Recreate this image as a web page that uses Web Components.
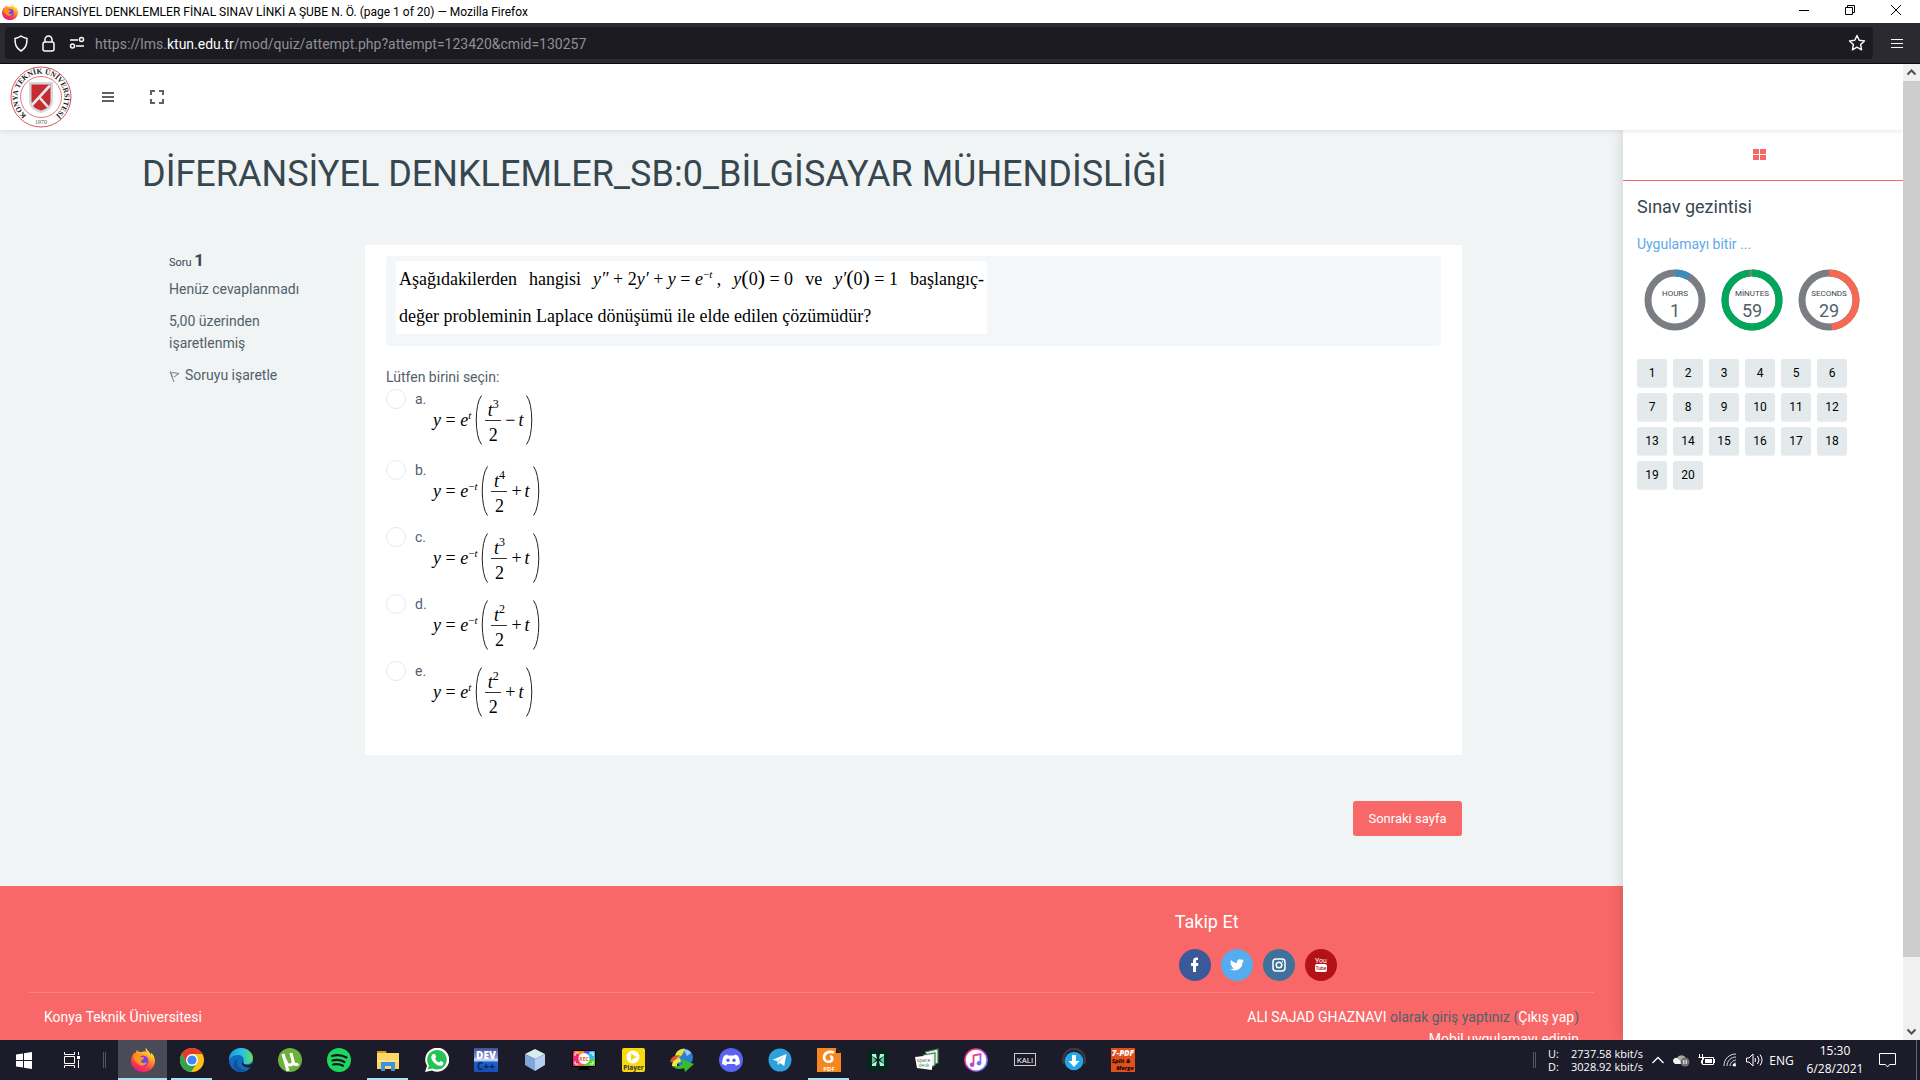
<!DOCTYPE html>
<html lang="tr">
<head>
<meta charset="utf-8">
<title>DİFERANSİYEL DENKLEMLER FİNAL SINAV LİNKİ A ŞUBE N. Ö.</title>
<style>
  html, body { height: 100%; margin: 0; }
  body {
    display: flex; flex-direction: column; overflow: hidden;
    font: 14px/22px Roboto, sans-serif; color: #526069; background: #f0f4f5;
    --brand: #f96868; --ink: #37474f; --ui: "Open Sans", "Noto Sans", sans-serif; --narrow: Roboto, "Noto Sans", sans-serif;
  }
  .viewport { flex: 1; display: flex; min-height: 0; }
  .site { flex: 1; display: flex; flex-direction: column; min-width: 0; min-height: 0; }
  .columns { flex: 1; display: flex; min-height: 0; }
  .scroll { flex: 1; min-width: 0; overflow: hidden; display: flex; flex-direction: column; }
</style>
</head>
<body>
<window-title>DİFERANSİYEL DENKLEMLER FİNAL SINAV LİNKİ A ŞUBE N. Ö. (page 1 of 20) — Mozilla Firefox</window-title>
<address-bar><span>https://lms.</span><b slot="host">ktun.edu.tr</b><span slot="path">/mod/quiz/attempt.php?attempt=123420&amp;cmid=130257</span></address-bar>
<div class="viewport">
  <div class="site">
    <site-header></site-header>
    <div class="columns">
      <div class="scroll">
        <quiz-page heading="DİFERANSİYEL DENKLEMLER_SB:0_BİLGİSAYAR MÜHENDİSLİĞİ">
          <question-info slot="info" number="1"></question-info>
          <question-card>
            <question-text slot="text"></question-text>
            <answer-option letter="a"><math-formula power="t" degree="3" sign="−"></math-formula></answer-option>
            <answer-option letter="b"><math-formula power="−t" degree="4" sign="+"></math-formula></answer-option>
            <answer-option letter="c"><math-formula power="−t" degree="3" sign="+"></math-formula></answer-option>
            <answer-option letter="d"><math-formula power="−t" degree="2" sign="+"></math-formula></answer-option>
            <answer-option letter="e"><math-formula power="t" degree="2" sign="+"></math-formula></answer-option>
          </question-card>
        </quiz-page>
        <site-footer></site-footer>
      </div>
      <quiz-aside>
        <time-circle label="HOURS" value="1" part-of="12" color="#3b8dbd"></time-circle>
        <time-circle label="MİNUTES" value="59" part-of="60" color="#00a65a"></time-circle>
        <time-circle label="SECONDS" value="29" part-of="60" color="#f56954"></time-circle>
      </quiz-aside>
    </div>
  </div>
  <page-scrollbar></page-scrollbar>
</div>
<task-bar></task-bar>

<script>
const define = (name, render) => customElements.define(name, class extends HTMLElement {
  constructor() { super(); this.attachShadow({ mode: 'open' }); }
  connectedCallback() { this.shadowRoot.innerHTML = render(this); }
});
const reset = `:host,*{box-sizing:border-box} button{font:inherit;color:inherit;background:none;border:0;padding:0;margin:0;cursor:pointer} svg{display:block} a{text-decoration:none}`;

const foxArt = `
  <defs><linearGradient id="fx" x1=".8" y1="0" x2=".3" y2="1"><stop offset="0" stop-color="#fff04a"/><stop offset=".4" stop-color="#ff9a1f"/><stop offset=".75" stop-color="#ff3650"/><stop offset="1" stop-color="#e31587"/></linearGradient></defs>
  <path fill="url(#fx)" d="M15 0c-1 2 0 3 1 4-2-1-4-1-5 0-2 0-4 0-5-2-1 1-1 3-1 4L4 4C2 6 0 9 0 13c0 6 5 11 12 11s12-5 12-11c0-4-2-7-4-8 0 1 0 2-.5 2C19 4 16 3 15 0z"/>
  <circle cx="12" cy="13" r="5.500" fill="#7542e5"/><path fill="#ff9422" d="M3 9c2-2 5-2 7 0 2 0 3 0 3 1s-2 2-3 3c0 2 3 3 6 1-1 4-6 5-9 2C4 14 3 12 3 9z"/>
  <path fill="#ffd33a" d="M15 0c-1 4 5 6 6 12 0-3-1-5-2-6 2 1 4 4 4 7 0-4-1-6-3-8 0 1 0 2-.5 2C19 4 16 3 15 0z"/>`;

const apps = {
  firefox: foxArt,
  chrome: `<circle cx="12" cy="12" r="12" fill="#fbc116"/><path fill="#e33b2e" d="M1.600 6A12 12 0 0 1 22.400 6L12 6z M1.600 6L7 15l5-9z"/><path fill="#31a350" d="M1.600 6A12 12 0 0 0 11 24l6-9-10 0z"/><circle cx="12" cy="12" r="6" fill="#fff"/><circle cx="12" cy="12" r="4.600" fill="#4285f4"/>`,
  edge: `<defs><linearGradient id="eg" x1="0" x2="1"><stop offset="0" stop-color="#1b9de2"/><stop offset=".6" stop-color="#2fc2df"/><stop offset="1" stop-color="#66e04b"/></linearGradient></defs><circle cx="12" cy="12" r="12" fill="#0f6cbd"/><path fill="url(#eg)" d="M0 12C0 5 5 0 12 0s12 5 12 10c0 4-3 6-6 6-2 0-4 0-4-1s1-1 1-3c0-3-3-5-6-5-5 0-8 3-9 5z"/><path fill="#1d1d2b" d="M14 14.500c1 2 3 3 6 2.500l4-2-1 4-2 .5c-5 0-9-2-8-6z"/><path fill="#1550a0" d="M8 14c0 5 4 8 9 8-3 2-8 2-11-1-3-4-1-9 3-10-1 1-1 2-1 3z"/>`,
  utorrent: `<circle cx="12" cy="12" r="12" fill="#6bb13b"/><path d="M5 6l5 17" fill="none" stroke="#fff" stroke-width="3"/><path d="M7.500 12c1 4 2.500 5 4.500 5s3.500-2 3-4L13 5M15 13c.5 3 2.500 4.500 5.500 3" fill="none" stroke="#fff" stroke-width="3"/>`,
  spotify: `<circle cx="12" cy="12" r="12" fill="#1ed760"/><path d="M5 8c5-1.500 10-1 14.500 1.500M5.500 12.500c4-1 8-.7 12 1.500M6 16.500c4-.8 7-.5 10 1.200" fill="none" stroke="#14141c" stroke-width="2.200" stroke-linecap="round"/>`,
  files: `<path fill="#d99a1c" d="M1 3h9l1 3H1z"/><path fill="#fdd663" d="M1 5h22v16H1z"/><path fill="#3c93dc" d="M5 14h14v9h-4v-5H9v5H5z"/><path fill="#ffe28c" d="M1 12h22v2H1z"/>`,
  whatsapp: `<path fill="#fff" d="M0 24l2-6A12 12 0 1 1 7 22.500z"/><path fill="#25c353" d="M2.500 21.500l1.500-4a9.800 9.800 0 1 1 3.500 3z"/><path fill="#fff" d="M8 6l2 0 1.200 3-1.200 1.500c1 2 2 3 4 4l1.500-1.500 3 1.200c0 3-2 4-4 3.500C10 16.500 7 13 6.300 10 6 8 7 7 8 6z"/>`,
  dev: `<defs><linearGradient id="dv" y1="0" y2="1" x2="0"><stop offset="0" stop-color="#3f4f9e"/><stop offset=".4" stop-color="#8d9bd8"/><stop offset=".5" stop-color="#dfe6ff"/><stop offset=".6" stop-color="#1d5fd0"/><stop offset="1" stop-color="#1550b8"/></linearGradient></defs><rect y="0" x="0" width="24" height="24" fill="url(#dv)"/><text x="12" y="11" font-size="10" font-weight="800" text-anchor="middle" fill="#fff">DEV</text><text x="12" y="22" font-size="10" font-weight="700" text-anchor="middle" fill="#0b2550">C++</text>`,
  box: `<path fill="#d5f0ec" d="M12 1l10 5-10 5L2 6z"/><path fill="#7ea7da" d="M2 6l10 5v12L2 17z"/><path fill="#b4cff2" d="M22 6l-10 5v12l10-6z"/>`,
  rec: `<rect y="2" width="24" height="17" fill="#000"/><path fill="#ff8a1e" d="M1 3h11v8z"/><path fill="#f0257b" d="M1 3l11 8-11 7z"/><path fill="#8b3fe0" d="M12 3h6l-6 8z"/><path fill="#2fbcf0" d="M18 3h5v8H12z"/><path fill="#61cf2c" d="M23 11v7H12v-7z"/><path fill="#ff5a5a" d="M1 18l11-7v7z"/><path d="M6 22h12l-2-3H8z"/><circle cx="12" cy="10.500" r="5.500" fill="#fff"/><text x="12" y="12.500" font-size="5" font-weight="700" text-anchor="middle" fill="#f04a3a">REC</text><path d="M3 8V5h3M18 5h3v3M3 13v3h3M18 16h3v-3" fill="none" stroke="#fff"/>`,
  player: `<rect y="0" x="1" width="23" height="24" rx="2" fill="#f8d90f"/><circle cx="12" cy="9" r="6.500" fill="#fff"/><path fill="#f8d90f" d="M10 5.500l5.500 3.500-5.500 3.500z"/><text x="12.500" y="22" font-size="6.500" font-weight="700" text-anchor="middle" fill="#333">Player</text>`,
  idm: `<circle cx="14" cy="9.500" r="9" fill="#2b7fd3"/><path fill="#9cc9f3" d="M14 2c3-1 6 1 7 3l-4 3z"/><path fill="#e9e23b" d="M5 8C6 3 11 0 15 1l-3 6-5 4z"/><path fill="#e05525" d="M0 14C1 9 6 6 11 8c-5 1-6 4-6 6z"/><path fill="#f2e64b" d="M2 18c0-5 3-7 8-8l1 4c-4 0-5 3-3 5z"/><path fill="#36bd2a" d="M2 18c3 3 8 4 12 2l1 4 9-8-13-5 2 5c-4 2-8 3-11 2z"/>`,
  discord: `<circle cx="12" cy="12" r="12" fill="#5865f2"/><path fill="#fff" d="M8 6.500l1 1h6l1-1 3 1.200c1.500 3 2 5.500 1.800 8.300L17 17.800l-1.200-1.800H8.200L7 17.800 3.200 16C3 13.200 3.500 10.700 5 7.700z"/><circle cx="9" cy="12.300" r="1.700" fill="#5865f2"/><circle cx="15" cy="12.300" r="1.700" fill="#5865f2"/>`,
  telegram: `<circle cx="12" cy="12" r="11.500" fill="#2ca1dc"/><path fill="#fff" d="M4.500 11.800L18.500 6l-2.300 12-4.200-3-2 2-.8-4z"/><path fill="#bcd9ea" d="M9.200 13l7-5-5 6-1.200 3z"/>`,
  foxit: `<path fill="#f6861f" d="M0 0h19l5 5v19H0z"/><path fill="#1a1a22" d="M19 0l5 5h-5z"/><path d="M17 4.500c-6-2-10 1-10 5 0 3 3 5 6 4 3-1 3-5 0-5" fill="none" stroke="#fff" stroke-width="2.600"/><text x="12" y="22.500" font-size="6" font-weight="700" text-anchor="middle" fill="#fff">PDF</text>`,
  xapp: `<rect x="1" y="1" width="22" height="22" rx="4" fill="#03261d"/><path fill="#b6f0d8" d="M6 6h4l1 5-5-3zM18 6h-4l-1 5 5-3zM6 18h4l1-5-5 3zM18 18h-4l-1-5 5 3z"/><path fill="#5dc79c" d="M6 8l4 4-4 4zM18 8l-4 4 4 4z"/>`,
  spacedesk: `<path d="M10 4l13-3v14l-3 1M8 7l12-2v12l-3 2" fill="#eee" stroke="#388443" stroke-width="1.200"/><path fill="#fff" d="M0 9l17-2v15L2 20z"/><text x="8.500" y="14" font-size="5" text-anchor="middle" fill="#555">space</text><text x="9" y="19" font-size="5" text-anchor="middle" fill="#1c9a44">desk</text>`,
  music: `<defs><linearGradient id="mu" x2="1" y2="1"><stop offset="0" stop-color="#fb3c5a"/><stop offset=".6" stop-color="#c24be0"/><stop offset="1" stop-color="#37b9f5"/></linearGradient></defs><circle cx="12" cy="12" r="11.800" fill="url(#mu)"/><circle cx="12" cy="12" r="10.300" fill="#fff"/><path d="M9.500 16.500V7.500l7-1.500v9" fill="none" stroke="url(#mu)" stroke-width="1.800"/><circle cx="8" cy="16.800" r="2.200" fill="#a34de8"/><circle cx="15" cy="15.300" r="2.200" fill="#6d72ee"/>`,
  kali: `<rect x="1.500" y="5.500" width="21" height="12" fill="none" stroke="#ccc"/><text x="12" y="15" font-size="8" text-anchor="middle" fill="#fff">KALI</text>`,
  download: `<path d="M2 16C-1 8 5 1 12 1s13 7 10 15" fill="none" stroke="#39393f" stroke-width="2.500"/><circle cx="12" cy="13" r="9.300" fill="#27a5ea"/><path fill="#fff" d="M10 7h4v6h3.500L12 19l-5.500-6H10z"/>`,
  sevenpdf: `<rect width="24" height="24" fill="#e04f1c"/><text x="12" y="7.500" font-size="8" font-weight="800" font-style="italic" text-anchor="middle" fill="#fff">7-PDF</text><text x="10" y="15" font-size="6" font-weight="700" font-style="italic" text-anchor="middle">Split &amp;</text><text x="14" y="21.500" font-size="6" font-weight="700" font-style="italic" text-anchor="middle">Merge</text>`
};

define('window-title', () => `<style>${reset}
  :host{display:flex;align-items:center;height:23px;background:#fff;color:#000;font:12px/20px var(--narrow);padding:0 1px 0 2px;flex:none}
  .name{flex:1;padding-left:5px;white-space:nowrap}
  .tools{display:flex} button{width:46px;height:23px;display:grid;place-items:center;padding-bottom:3px}
  </style><svg width="16" height="16" viewBox="0 0 24 24" aria-hidden="true">${foxArt}</svg>
  <span class="name"><slot></slot></span>
  <span class="tools">
  <button aria-label="Minimize"><svg width="10" height="10"><path d="M0 5.500h10" stroke="#000"/></svg></button>
  <button aria-label="Restore"><svg width="10" height="10" fill="none" stroke="#000"><path d="M.5 2.500h7v7h-7zM2.500 2.500v-2h7v7h-2"/></svg></button>
  <button aria-label="Close"><svg width="10" height="10" stroke="#000"><path d="M0 0l10 10M10 0L0 10"/></svg></button></span>`);

define('address-bar', () => `<style>${reset}
  :host{display:flex;align-items:center;height:41px;flex:none;background:#2b2a33;border-bottom:1px solid #0c0c0d;padding-left:5px;color:#fbfbfe}
  .field{flex:1;height:32px;background:#1c1b22;border-radius:4px;display:flex;align-items:center;padding:0 7px 0 8px}
  .icons{display:flex;gap:12px;align-items:center;padding-right:10px}
  .url{flex:1;font:14px/20px var(--narrow);padding-top:2px;color:#8f8f98;white-space:nowrap;outline:0} ::slotted(b){font-weight:400;color:#fbfbfe}
  .menu{width:47px;height:40px;display:grid;place-items:center}
  </style><div class="field"><span class="icons">
  <button aria-label="Tracking protection"><svg width="16" height="17" fill="none" stroke="#fbfbfe" stroke-width="1.500"><path d="M8 1c2 1.500 4 2 6 2.500 0 6-1 9.500-6 12.500-5-3-6-6.500-6-12.500C4 3 6 2.500 8 1z"/></svg></button>
  <button aria-label="Connection secure"><svg width="16" height="17" fill="none" stroke="#fbfbfe" stroke-width="1.500"><rect x="2" y="7" width="11" height="9" rx="2"/><path d="M4 7V4.500a3.500 3.500 0 0 1 7 0V7"/></svg></button>
  <button aria-label="Permissions"><svg width="16" height="16" fill="none" stroke="#fbfbfe" stroke-width="1.500"><path d="M1 5h8M7 11h8"/><circle cx="12.500" cy="4.500" r="2"/><circle cx="3.500" cy="11" r="2"/></svg></button></span>
  <span class="url" role="textbox" aria-label="Address"><slot></slot><slot name="host"></slot><slot name="path"></slot></span>
  <button aria-label="Bookmark"><svg width="18" height="18" fill="none" stroke="#fbfbfe" stroke-width="1.400" stroke-linejoin="round"><path d="M9 1.500l2.200 4.800 5.300.6-3.900 3.600 1 5.300L9 13.200l-4.600 2.600 1-5.300L1.500 6.900l5.300-.6z"/></svg></button></div>
  <button class="menu" aria-label="Menu"><svg width="12" height="11" stroke="#fbfbfe"><path d="M0 1.500h12M0 5.500h12M0 9.500h12"/></svg></button>`);

define('university-seal', () => `<style>:host{display:block;width:62px;height:62px}svg{display:block}text{font-family:"Liberation Serif",serif;font-weight:700}</style>
  <svg width="62" height="62" viewBox="0 0 62 62" role="img" aria-label="Konya Teknik Üniversitesi">
  <circle cx="31" cy="31" r="30" fill="#fff" stroke="#d8545c"/><circle cx="31" cy="31" r="20.500" fill="none" stroke="#dd6a70" stroke-width=".9"/>
  <path id="ring" d="M16.500 49.200A23.300 23.300 0 1 1 45.500 49.200" fill="none"/>
  <text font-size="7.500" fill="#222"><textPath href="#ring" startOffset="50%" text-anchor="middle">KONYA TEKNİK ÜNİVERSİTESİ</textPath></text>
  <text x="31" y="58" font-size="6" text-anchor="middle" fill="#555" style="font-weight:400">1970</text>
  <path d="M19 16h24v18c0 7-4 11-12 13-8-2-12-6-12-13z" fill="#d6d7d9"/><path d="M21.500 18.500h19V34c0 6-3 8.500-9.500 10.500-6.500-2-9.500-4.500-9.500-10.500z" fill="#c52b31"/>
  <path d="M22 39L40 19.500M29 31l9 10" fill="none" stroke="#e6e6e8" stroke-width="2.600"/></svg>`);

define('site-header', () => `<style>${reset}
  :host{display:flex;align-items:center;height:66px;flex:none;background:#fff;box-shadow:0 2px 4px rgba(0,0,0,.08);position:relative;z-index:3;padding-left:10px}
  button{width:49px;height:48px;display:grid;place-items:center} .first{margin-left:11px}
  </style><university-seal></university-seal>
  <button class="first" aria-label="Menü"><svg width="12" height="10" stroke="#616161" stroke-width="2"><path d="M0 1h12M0 5h12M0 9h12"/></svg></button>
  <button aria-label="Tam ekran"><svg width="14" height="14" fill="none" stroke="#616161" stroke-width="2"><path d="M1 5V1h4M9 1h4v4M13 9v4H9M5 13H1V9"/></svg></button>`);

define('quiz-page', el => `<style>${reset}
  :host{display:block;flex:none;padding:22px 142px 50px}
  h1{font:400 36px/44px Roboto,sans-serif;color:var(--ink);margin:0 0 49px;white-space:nowrap}
  .question{display:flex;padding:0 19px 0 26px}
  .info{width:197px;flex:none;padding-right:46px} .card{flex:1;min-width:0}
  .nav{display:flex;justify-content:flex-end;padding:46px 19px 0 0}
  .next{background:var(--brand);color:#fff;border-radius:3px;font-size:13px;line-height:19px;padding:8px 15px;font-weight:400;min-width:109px}
  </style><h1>${el.getAttribute('heading')}</h1>
  <form><div class="question"><div class="info"><slot name="info"></slot></div><div class="card"><slot></slot></div></div>
  <div class="nav"><button class="next" type="button">Sonraki sayfa</button></div></form>`);

define('question-info', el => `<style>${reset}
  :host{display:block;padding:7px 0 0 1px} h3{margin:0 0 4px;font-weight:400;font-size:11px;line-height:22px;color:var(--ink)} h3 b{font-size:17px;line-height:0}
  p{margin:0 0 10px} a{display:flex;align-items:center;gap:5px;color:#526069}
  </style><h3>Soru <b>${el.getAttribute('number')}</b></h3><p>Henüz cevaplanmadı</p><p>5,00 üzerinden işaretlenmiş</p>
  <a href="#"><svg width="11" height="16" fill="none" stroke="#6f7d85"><path d="M1 4.500l4 10.500M3 5.500l7 1-5 3.500M1.500 4.500l2 6"/></svg>Soruyu işaretle</a>`);

define('question-card', () => `<style>${reset}
  :host{display:block;background:#fff;padding:11px 21px 28px}
  .text{background:#f3f7f9;border-radius:4px;padding:5px 10px 12px}
  fieldset{border:0;margin:0;padding:20px 0 0;min-width:0} legend{float:left;padding:0;line-height:22px} .list{clear:both}
  </style><div class="text"><slot name="text"></slot></div><fieldset><legend>Lütfen birini seçin:</legend><div class="list"><slot></slot></div></fieldset>`);

define('question-text', () => `<style>${reset}
  :host{display:block;width:591px;max-width:100%;background:#fff;color:#000;font:18px/37px "Liberation Serif",serif;padding:0 3px;height:73px;overflow:hidden}
  div{white-space:nowrap} .spread{display:flex;justify-content:space-between} sup{font-size:11px;line-height:0;vertical-align:7px}
  .p{font-size:22px;line-height:0}
  </style><div class="spread"><span>Aşağıdakilerden</span><span>hangisi</span><span><i>y″</i> + 2<i>y′</i> + <i>y</i> = <i>e</i><sup>−<i>t</i></sup> ,</span><span><i>y</i><span class="p">(</span>0<span class="p">)</span> = 0</span><span>ve</span><span><i>y′</i><span class="p">(</span>0<span class="p">)</span> = 1</span><span>başlangıç-</span></div>
  <div>değer probleminin Laplace dönüşümü ile elde edilen çözümüdür?</div>`);

define('answer-option', el => { const l = el.getAttribute('letter'); return `<style>${reset}
  :host{display:flex;height:67px;align-items:flex-start} :host([letter="a"]){height:71px}
  input{appearance:none;width:20px;height:20px;border:1px solid #e4eaec;border-radius:50%;margin:1px 9px 0 0;background:#fff;flex:none}
  label{display:flex;align-items:flex-start} .l{width:18px;line-height:22px}
  </style><input type="radio" id="o" name="answer" value="${l}"><label for="o"><span class="l">${l}.</span><slot></slot></label>`; });

define('math-formula', el => { const n = el.getAttribute('power').startsWith('−'); return `<style>${reset}
  :host{display:flex;align-items:center;height:50px;margin-top:7px;color:#000;font:18px/20px "Liberation Serif",serif;white-space:nowrap}
  sup{font-size:11px;line-height:0;vertical-align:7px;padding-right:4px} .f{display:flex;flex-direction:column;align-items:center;width:16px;margin:0 4px 0 3px}
  .f span{height:24px;line-height:28px} .f span:first-child{border-bottom:1px solid #333;height:25px;width:16px;text-align:center;line-height:28px}
  .f sup{padding:0;font-size:12px;vertical-align:8px} .s{display:flex;gap:3px;padding-right:3px}
  </style><span><i>y</i> = <i>e</i><sup>${n ? '−' : ''}<i>t</i></sup></span>
  <svg width="7" height="50" fill="none" stroke="#222"><path d="M6.500 .5C-.5 9-.5 41 6.500 49.500"/></svg>
  <span class="f"><span><i>t</i><sup>${el.getAttribute('degree')}</sup></span><span>2</span></span><span class="s"><span>${el.getAttribute('sign')}</span><i>t</i></span>
  <svg width="7" height="50" fill="none" stroke="#222"><path d="M.5 .5C7.500 9 7.500 41 .5 49.500"/></svg>`; });

define('site-footer', () => `<style>${reset}
  :host{display:block;flex:1 0 auto;background:var(--brand);color:#526069;padding:23px 29px 0}
  .follow{margin-left:72%;padding-left:19px} h4{margin:0 0 15px;font:400 18px/25px Roboto,sans-serif;color:#fff}
  .links{display:flex;gap:10px;padding-left:4px;margin-bottom:11px} .links a{width:32px;height:32px;border-radius:50%;display:grid;place-items:center}
  .legal{display:flex;justify-content:space-between;border-top:1px solid #fa8585;padding:13px 15px 0} .legal a{color:#fff} .r{text-align:right}
  .legal div{line-height:22px}
  </style><div class="follow"><h4>Takip Et</h4><div class="links">
  <a href="#" aria-label="Facebook" style="background:#3b5998"><svg width="14" height="16" fill="#fff"><path d="M5 15V9H3V6h2V4c0-2.500 1.500-3.500 3.500-3.500H10v2.500H9.500C8.300 3 8 3.400 8 4.300V6h2.400l-.4 3H8v6z"/></svg></a>
  <a href="#" aria-label="Twitter" style="background:#55acee"><svg width="14" height="12" viewBox="0 0 14 12" fill="#fff"><path d="M1 1c1.500 1.800 3.500 2.800 6 3C6.500 2 8 .3 10 .3c.9 0 1.500.3 2 .8l1.800-.6-1.100 1.500L14 1.700l-1.500 1.600C12.700 8 9 11.500 4.500 11.500 2.900 11.500 1.300 11 0 10.300c1.500.1 3-.3 4-1.200-1.200 0-2.200-.8-2.500-2h1.100C1.300 6.700.5 5.700.5 4.300L1.700 4.600C.5 3.800.2 2.300 1 1z"/></svg></a>
  <a href="#" aria-label="Instagram" style="background:#3f729b"><svg width="14" height="14" fill="none" stroke="#fff" stroke-width="1.500"><rect x="1" y="1" width="12" height="12" rx="3"/><circle cx="7" cy="7" r="2.800"/><path d="M10 3.500h1"/></svg></a>
  <a href="#" aria-label="YouTube" style="background:#b31217"><svg width="14" height="16"><text x="7" y="6" font-size="7" text-anchor="middle" fill="#fff" font-family="Roboto,sans-serif">You</text><rect x="1" y="7" width="12" height="8" rx="2" fill="#fff"/><text x="7" y="13" font-size="5" font-weight="500" text-anchor="middle" fill="#b31217" font-family="Roboto,sans-serif">Tube</text></svg></a>
  </div></div><div class="legal"><div><a href="#">Konya Teknik Üniversitesi</a></div><div class="r"><a href="#">ALI SAJAD GHAZNAVI</a> olarak giriş yaptınız (<a href="#">Çıkış yap</a>)<br><a href="#">Mobil uygulamayı edinin</a></div></div>`);

define('time-circle', el => { const turn = el.getAttribute('value') / el.getAttribute('part-of') * 100; return `<style>${reset}
  :host{display:grid;width:62px;height:62px;place-items:center} svg,div{grid-area:1/1} div{text-align:center;padding-top:8px}
  small{display:block;font-size:8px;line-height:14px;color:var(--ink)} b{display:block;font:400 18px/20px Roboto,sans-serif}
  </style><svg width="62" height="62" fill="none" stroke-width="7"><circle cx="31" cy="31" r="27" stroke="#7a7d82"/><circle cx="31" cy="31" r="27" stroke="${el.getAttribute('color')}" pathLength="100" stroke-dasharray="${turn} 100" transform="rotate(-90 31 31)"/></svg>
  <div><small>${el.getAttribute('label')}</small><b>${el.getAttribute('value')}</b></div>`; });

define('quiz-aside', () => `<style>${reset}
  :host{display:block;width:280px;flex:none;background:#fff;box-shadow:0 0 14px rgba(0,0,0,.16);position:relative;z-index:2}
  .tab{width:100%;height:51px;border-bottom:1px solid var(--brand);display:grid;place-items:center;padding:0 8px 2px 0}
  section{padding:12px 14px} h5{margin:0 0 12px;font:400 18px/28px Roboto,sans-serif;color:var(--ink)} a.end{color:#62a8ea;display:block;line-height:22px;margin-bottom:14px}
  .timer{display:flex;gap:15px;padding-left:7px;margin-bottom:28px} .grid{display:grid;grid-template-columns:repeat(6,30px);gap:6px}
  .grid a{height:28px;background:#e4eaec;border-radius:3px;color:#000;font-size:12px;line-height:28px;text-align:center;box-shadow:0 1px 1px rgba(0,0,0,.07)}
  </style><button class="tab" aria-label="Bloklar"><svg width="13" height="11" fill="#f96868"><path d="M0 0h6v5H0zM7 0h6v5H7zM0 6h6v5H0zM7 6h6v5H7z"/></svg></button>
  <section><h5>Sınav gezintisi</h5><a class="end" href="#">Uygulamayı bitir ...</a><div class="timer"><slot></slot></div>
  <nav class="grid">${Array.from({ length: 20 }, (_, i) => `<a href="#">${i + 1}</a>`).join('')}</nav></section>`);

define('page-scrollbar', () => `<style>${reset}
  :host{display:flex;flex-direction:column;width:17px;flex:none;background:#f0f0f0;position:relative;z-index:4} button{height:17px;display:grid;place-items:center;flex:none} .track{flex:1} .thumb{height:93%;background:#cdcdcd}
  </style><button aria-label="Yukarı"><svg width="9" height="7" fill="none" stroke="#505050" stroke-width="2"><path d="M.5 5.500l4-4 4 4"/></svg></button><div class="track"><div class="thumb"></div></div><button aria-label="Aşağı"><svg width="9" height="7" fill="none" stroke="#505050" stroke-width="2"><path d="M.5 1.500l4 4 4-4"/></svg></button>`);

define('task-icon', el => `<style>${reset}
  :host{display:grid;width:49px;height:40px;flex:none}
  button{display:grid;place-items:center;margin:0 4px;border-bottom:2px solid transparent;padding-top:2px} :host([open]) button{border-color:#a9e1f7} :host([active]) button{background:#4b4a57;margin:0;border-color:#a9e1f7}
  text{font-family:"Open Sans",sans-serif}
  </style><button aria-label="${el.getAttribute('app')}"><svg width="24" height="24" viewBox="0 0 24 24">${apps[el.getAttribute('app')]}</svg></button>`);

define('task-bar', () => `<style>${reset}
  :host{display:flex;height:40px;flex:none;background:#1c1b29;color:#fff;font:12px/19px var(--ui);position:relative;z-index:5}
  .sys{width:48px;display:grid;place-items:center} .sep{width:3px;height:16px;border:solid #55545f;border-width:0 1px;align-self:center}
  .sp{flex:1} .apps{display:flex;padding-left:12px} .sep.a{margin-left:7px} .tray{display:flex;align-items:center}
  .speed{display:grid;grid-template-columns:23px auto;font-size:11px;line-height:13px;padding:0 3px 0 12px;white-space:nowrap}
  .tray button{display:grid;place-items:center;width:24px;height:40px} .tray .lang{width:31px} .tray .clock{width:76px;line-height:18px;text-align:center;display:block;white-space:nowrap}
  .tray .note{width:29px} .end{width:14px} .edge{width:4px;height:40px;border-left:1px solid #65646e}
  </style><button class="sys" aria-label="Start"><svg width="16" height="17" fill="#fff"><path d="M0 2.500l7-1V8H0zM8 1.300L16 0v8H8zM0 9h7v6.500l-7-1zM8 9h8v8l-8-1.300z"/></svg></button>
  <button class="sys" aria-label="Task view"><svg width="17" height="16" fill="none" stroke="#fff"><path d="M.5 0v2.500h10V0M.5 16v-2.500h10V16M.5 4.500h10v7H.5zM14.500 0v3M14.500 8v8"/><path d="M13 4h3v3h-3z" fill="#fff" stroke="none"/></svg></button>
  <span class="sep a"></span><div class="apps">${Object.keys(apps).map(n => `<task-icon app="${n}" ${n === 'firefox' ? 'active' : ['chrome', 'files', 'foxit'].includes(n) ? 'open' : ''}></task-icon>`).join('')}</div>
  <span class="sp"></span><div class="tray"><span class="sep"></span>
  <div class="speed"><span>U:</span><span>2737.58 kbit/s</span><span>D:</span><span>3028.92 kbit/s</span></div>
  <button aria-label="Hidden icons"><svg width="12" height="8" fill="none" stroke="#fff" stroke-width="1.300"><path d="M.5 7L6 1.500 11.500 7"/></svg></button>
  <button aria-label="Cloud"><svg width="18" height="14"><path fill="#aaa" d="M4 5a5 5 0 0 1 9 0 4 4 0 0 1 1 6H4z"/><path fill="#f4f4f4" d="M1 10a3 3 0 0 1 3-5l6 5v1H2z"/><circle cx="12" cy="9" r="4.500" fill="#707070"/><path d="M10.800 7v4M13.200 7v4" stroke="#fff"/></svg></button>
  <button aria-label="Battery"><svg width="17" height="13" fill="none" stroke="#fff"><path d="M4.500 3.500h11v7h-11zM16.500 5v4M1.500 0v3M4.500 0v3M.5 3.500h5v2l-2 1v3"/><path d="M7 5h7v4H7z" fill="#fff" stroke="none"/></svg></button>
  <button aria-label="Network"><svg width="14" height="14" fill="none" stroke="#ddd"><path d="M1 13C1 6 6 1 13 1M4 13c0-5 4-9 9-9M7 13c0-3 3-6 6-6M10 13c0-2 1-3 3-3"/><circle cx="11.500" cy="12" r="1.500" fill="#fff" stroke="none"/></svg></button>
  <button aria-label="Volume"><svg width="17" height="14" fill="none" stroke="#fff"><path d="M.5 5v4h2.500l4 4V1L3 5zM9 5q1 2 0 4M11.500 3q3 4 0 8M14 1.500q4 5.500 0 11"/></svg></button>
  <button class="lang">ENG</button><button class="clock">15:30<br>6/28/2021</button>
  <button class="note" aria-label="Notifications"><svg width="17" height="16" fill="none" stroke="#fff"><path d="M.5 1.500h16v11h-6L8.500 15l-2-2.500h-6z"/></svg></button></div><span class="end"></span><span class="edge"></span>`);
</script>
</body>
</html>
